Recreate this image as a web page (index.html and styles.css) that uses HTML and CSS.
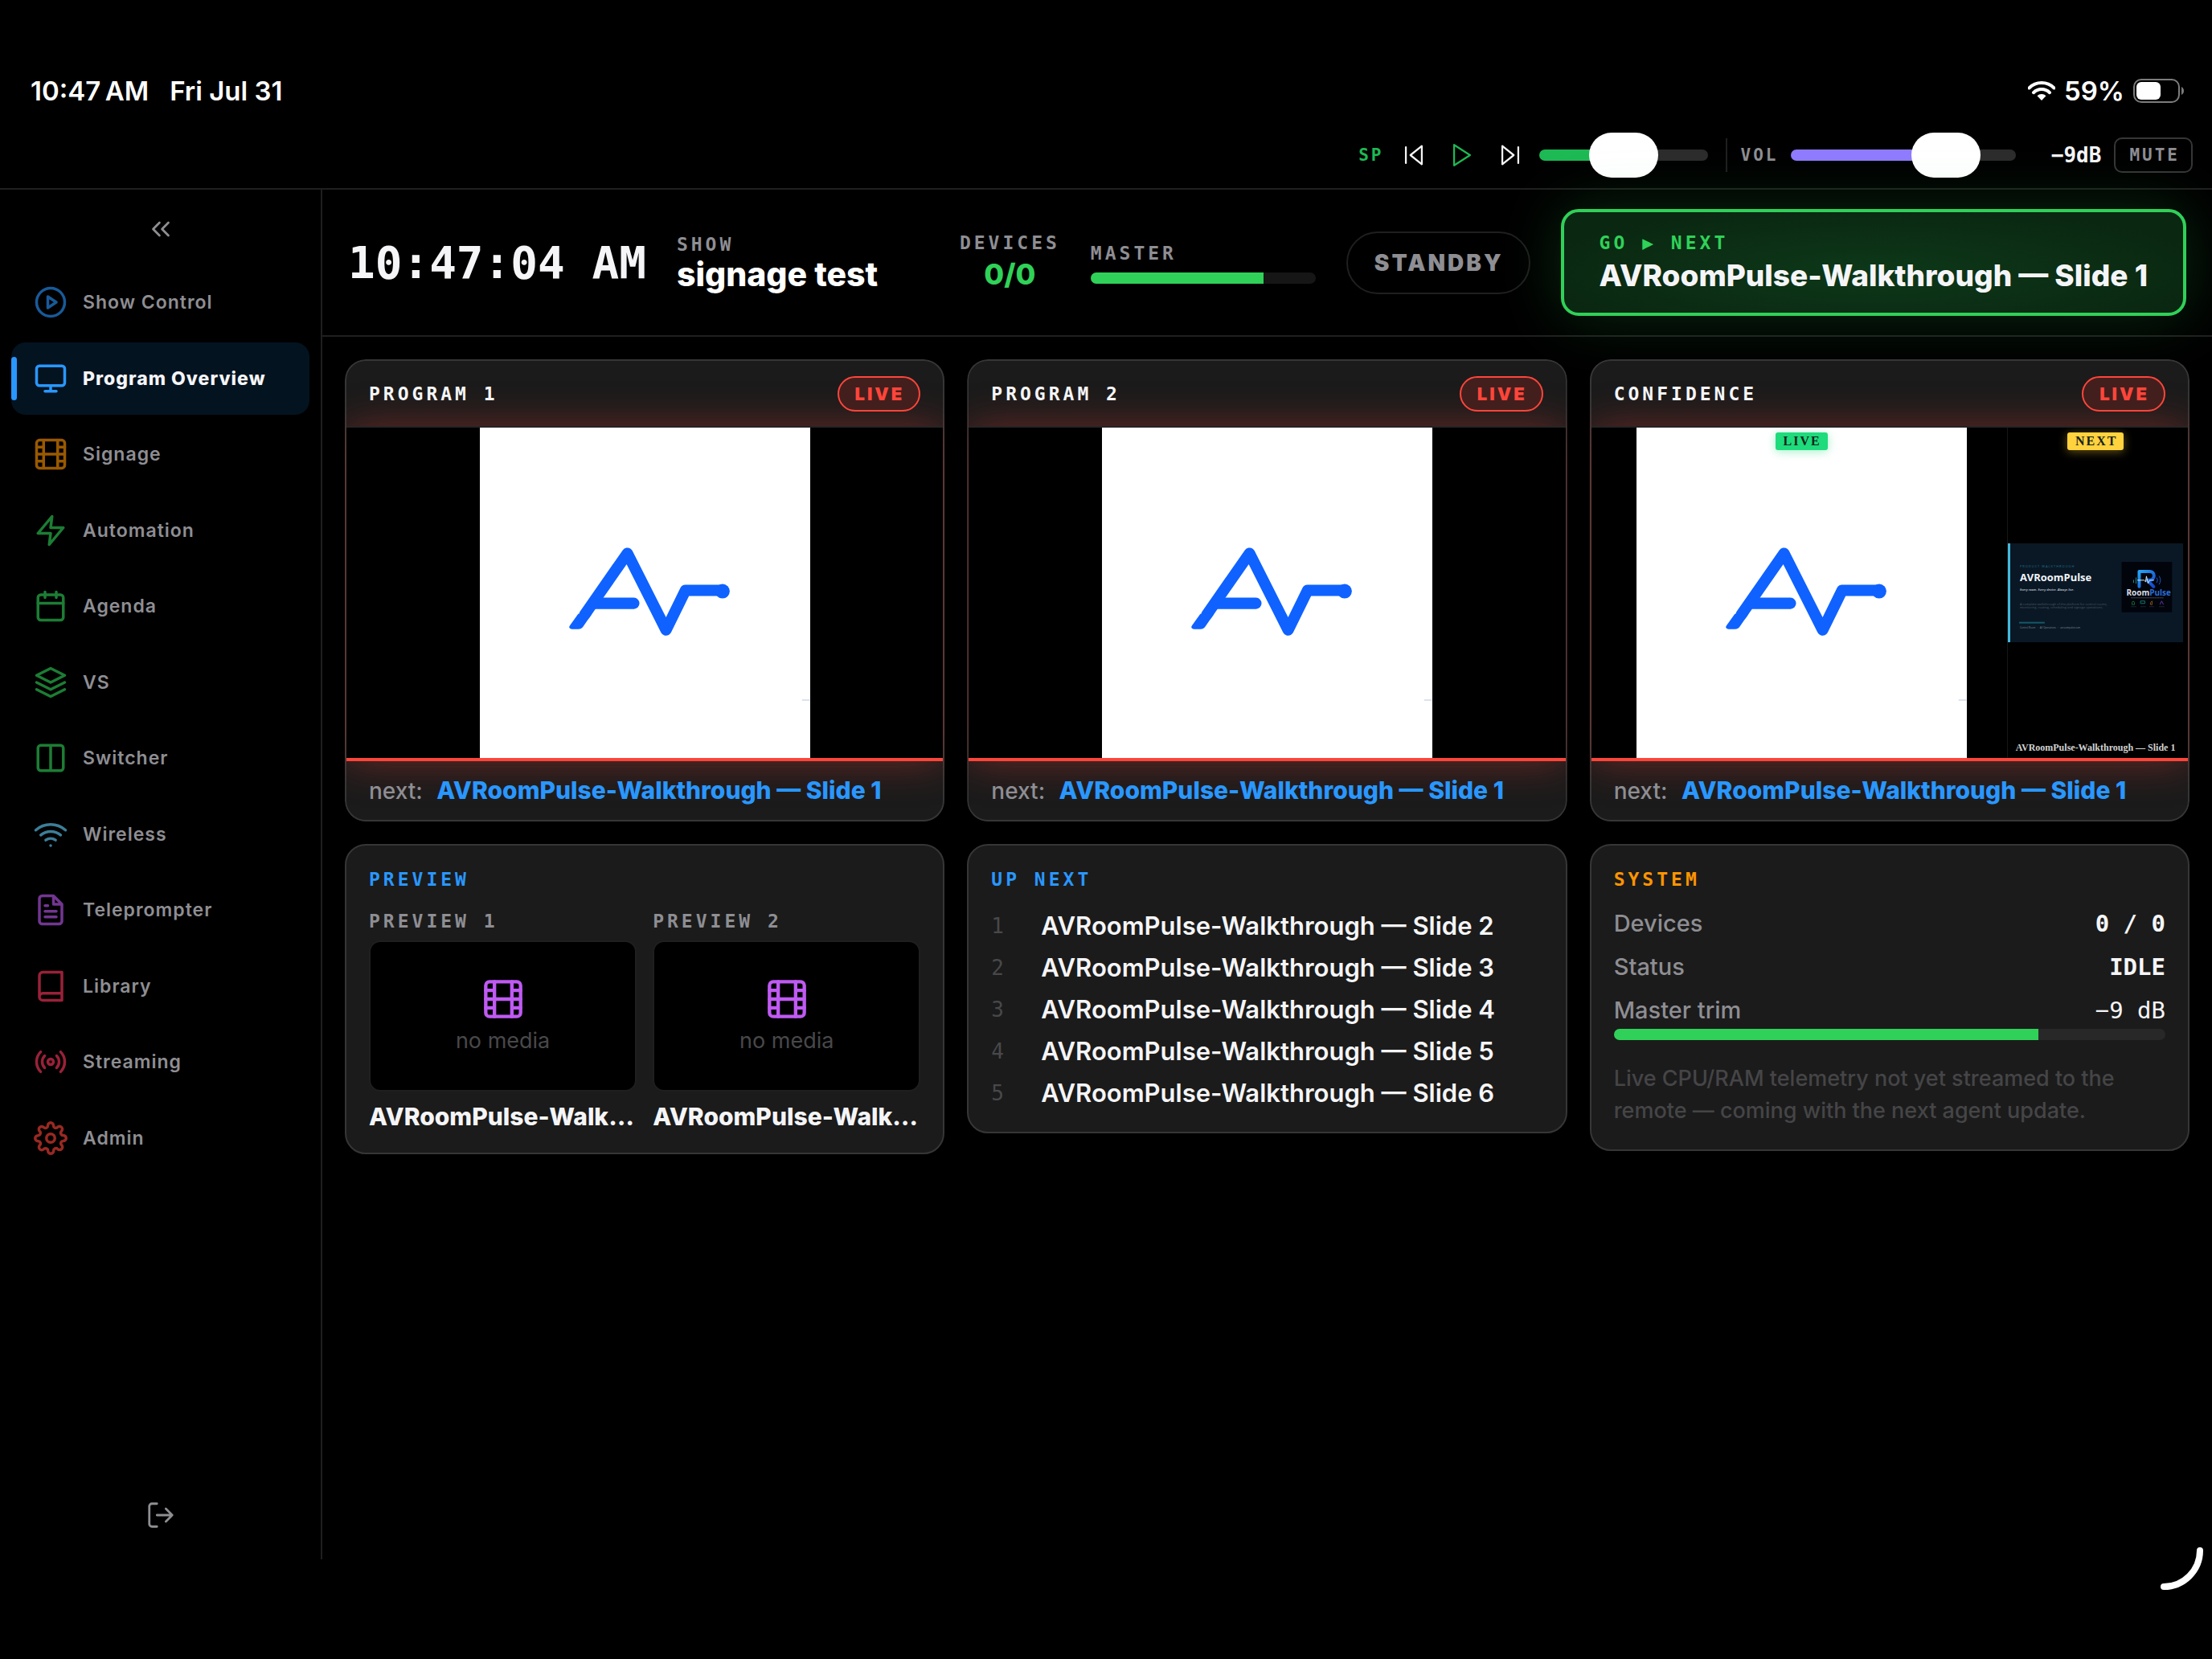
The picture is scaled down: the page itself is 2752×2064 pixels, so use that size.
FILE: index.html
```html
<!DOCTYPE html>
<html lang="en">
<head>
<meta charset="utf-8">
<meta name="viewport" content="width=device-width, initial-scale=1">
<title>Program Overview</title>
<link rel="stylesheet" href="styles.css">
</head>
<body>
<svg class="defs" aria-hidden="true">
  <symbol id="film" viewBox="0 0 24 24"><rect x="2" y="2" width="20" height="20" rx="2.18"/><path d="M7 2v20M17 2v20M2 12h20M2 7h5M2 17h5M17 17h5M17 7h5"/></symbol>
  <symbol id="av-logo" viewBox="0 0 410 410">
    <rect width="410" height="410" fill="#fff"/>
    <g fill="none" stroke="#0f62ff" stroke-width="14" stroke-linecap="round" stroke-linejoin="round">
      <path d="M130 232 183 156 231 251 255 202H300"/>
      <path d="M143 218H191"/>
    </g>
    <path d="M114 250Q109 249 112 245L122 231H139L128 247Q126 250 122 250Z" fill="#0f62ff"/>
    <circle cx="301" cy="203" r="9" fill="#0f62ff"/>
    <path d="M400 338h9" stroke="#b8c8dc" stroke-width="1"/>
  </symbol>
</svg>

<div class="status-bar">
  <div class="status-left"><span>10:47&#8201;AM</span><span>Fri Jul 31</span></div>
  <div class="status-right">
    <svg class="status-wifi" viewBox="0 0 34 24" aria-hidden="true"><g fill="none" stroke="#fff" stroke-width="4"><path d="M1.500 8.500A22 22 0 0 1 32.500 8.500"/><path d="M7 14.200A14.300 14.300 0 0 1 27 14.200"/></g><path d="M17 24 11.500 18.300A7.600 7.600 0 0 1 22.500 18.300Z" fill="#fff"/></svg>
    <span>59%</span>
    <svg class="status-battery" viewBox="0 0 64 30" aria-hidden="true"><rect x="1" y="1" width="56" height="28" rx="9" fill="none" stroke="#7c7c7c" stroke-width="2"/><rect x="4" y="4" width="30" height="22" rx="6" fill="#fff"/><path d="M60 10c4 2 4 8 0 10z" fill="#7c7c7c"/></svg>
  </div>
</div>

<div class="transport">
  <span class="tag tag-sp">SP</span>
  <div class="transport-buttons">
    <button type="button" aria-label="Previous track"><svg viewBox="0 0 24 24"><path d="M19 20 9 12 19 4zM5 19V5"/></svg></button>
    <button type="button" class="is-green" aria-label="Play"><svg viewBox="0 0 24 24"><path d="M5 3 19 12 5 21z"/></svg></button>
    <button type="button" aria-label="Next track"><svg viewBox="0 0 24 24"><path d="M5 4 15 12 5 20zM19 5v14"/></svg></button>
  </div>
  <input class="slider slider-sp" type="range" min="0" max="100" value="50" aria-label="Music volume">
  <span class="divider"></span>
  <label class="tag" for="vol">VOL</label>
  <input class="slider slider-vol" id="vol" type="range" min="0" max="100" value="77">
  <output class="vol-value" for="vol">−9dB</output>
  <button type="button" class="mute">MUTE</button>
</div>

<div class="shell">
  <aside class="sidebar">
    <button type="button" class="collapse" aria-label="Collapse sidebar"><svg viewBox="0 0 24 24"><path d="M11 17 6 12 11 7M18 17 13 12 18 7"/></svg></button>
    <nav class="nav">
      <a href="#show" class="c-blue"><svg viewBox="0 0 24 24"><circle cx="12" cy="12" r="10"/><path d="M10 8 16 12 10 16z"/></svg>Show Control</a>
      <a href="#program" class="c-blue active" aria-current="page"><svg viewBox="0 0 24 24"><rect x="2" y="3" width="20" height="14" rx="2"/><path d="M8 21h8M12 17v4"/></svg>Program Overview</a>
      <a href="#signage" class="c-orange"><svg><use href="#film"/></svg>Signage</a>
      <a href="#automation" class="c-green"><svg viewBox="0 0 24 24"><path d="M13 2 3 14h9l-1 8 10-12h-9z"/></svg>Automation</a>
      <a href="#agenda" class="c-green"><svg viewBox="0 0 24 24"><rect x="3" y="4" width="18" height="18" rx="2"/><path d="M16 2v4M8 2v4M3 10h18"/></svg>Agenda</a>
      <a href="#vs" class="c-green"><svg viewBox="0 0 24 24"><path d="M12 2 2 7l10 5 10-5zM2 17l10 5 10-5M2 12l10 5 10-5"/></svg>VS</a>
      <a href="#switcher" class="c-green"><svg viewBox="0 0 24 24"><path d="M12 3h7a2 2 0 0 1 2 2v14a2 2 0 0 1-2 2h-7m0-18H5a2 2 0 0 0-2 2v14a2 2 0 0 0 2 2h7m0-18v18"/></svg>Switcher</a>
      <a href="#wireless" class="c-cyan"><svg viewBox="0 0 24 24"><path d="M5 12.550a11 11 0 0 1 14.080 0M1.420 9a16 16 0 0 1 21.160 0M8.530 16.110a6 6 0 0 1 6.950 0M12 20h.01"/></svg>Wireless</a>
      <a href="#teleprompter" class="c-purple"><svg viewBox="0 0 24 24"><path d="M14 2H6a2 2 0 0 0-2 2v16a2 2 0 0 0 2 2h12a2 2 0 0 0 2-2V8zM14 2v6h6M16 13H8M16 17H8M10 9H8"/></svg>Teleprompter</a>
      <a href="#library" class="c-pink"><svg viewBox="0 0 24 24"><path d="M4 19.500A2.500 2.500 0 0 1 6.500 17H20M6.500 2H20v20H6.500A2.500 2.500 0 0 1 4 19.500v-15A2.500 2.500 0 0 1 6.500 2z"/></svg>Library</a>
      <a href="#streaming" class="c-pink"><svg viewBox="0 0 24 24"><circle cx="12" cy="12" r="2"/><path d="M16.240 7.760a6 6 0 0 1 0 8.490m-8.480-.01a6 6 0 0 1 0-8.490m11.310-2.820a10 10 0 0 1 0 14.140m-14.140 0a10 10 0 0 1 0-14.140"/></svg>Streaming</a>
      <a href="#admin" class="c-red"><svg viewBox="0 0 24 24"><circle cx="12" cy="12" r="3"/><path d="M19.400 15a1.650 1.650 0 0 0 .33 1.820l.06.06a2 2 0 0 1-2.830 2.830l-.06-.06a1.650 1.650 0 0 0-1.820-.33 1.650 1.650 0 0 0-1 1.510V21a2 2 0 0 1-4 0v-.09A1.650 1.650 0 0 0 9 19.400a1.650 1.650 0 0 0-1.820.33l-.06.06a2 2 0 0 1-2.830-2.830l.06-.06a1.650 1.650 0 0 0 .33-1.820 1.650 1.650 0 0 0-1.510-1H3a2 2 0 0 1 0-4h.09A1.650 1.650 0 0 0 4.600 9a1.650 1.650 0 0 0-.33-1.820l-.06-.06a2 2 0 0 1 2.830-2.830l.06.06a1.650 1.650 0 0 0 1.820.33H9a1.650 1.650 0 0 0 1-1.510V3a2 2 0 0 1 4 0v.09a1.650 1.650 0 0 0 1 1.510 1.650 1.650 0 0 0 1.820-.33l.06-.06a2 2 0 0 1 2.830 2.830l-.06.06a1.650 1.650 0 0 0-.33 1.820V9a1.650 1.650 0 0 0 1.510 1H21a2 2 0 0 1 0 4h-.09a1.650 1.650 0 0 0-1.510 1z"/></svg>Admin</a>
    </nav>
    <button type="button" class="logout" aria-label="Log out"><svg viewBox="0 0 24 24"><path d="M9 21H5a2 2 0 0 1-2-2V5a2 2 0 0 1 2-2h4M16 17l5-5-5-5M21 12H9"/></svg></button>
  </aside>

  <div class="main">
    <header class="show-bar">
      <time class="clock">10:47:04 AM</time>
      <div class="show"><span class="label">SHOW</span><strong>signage test</strong></div>
      <div class="devices"><span class="label">DEVICES</span><strong>0/0</strong></div>
      <div class="master"><span class="label">MASTER</span><div class="meter"><div class="meter-fill" style="width:77%"></div></div></div>
      <button type="button" class="standby">STANDBY</button>
      <button type="button" class="go"><span class="label">GO ▶ NEXT</span><strong>AVRoomPulse-Walkthrough — Slide 1</strong></button>
    </header>

    <main class="board">
      <section class="card output">
        <div class="output-head"><h2 class="label">PROGRAM 1</h2><span class="live">LIVE</span></div>
        <div class="screen"><svg class="frame" role="img" aria-label="AV logo"><use href="#av-logo"/></svg></div>
        <p class="output-next">next: <strong>AVRoomPulse-Walkthrough — Slide 1</strong></p>
      </section>
      <section class="card output">
        <div class="output-head"><h2 class="label">PROGRAM 2</h2><span class="live">LIVE</span></div>
        <div class="screen"><svg class="frame" role="img" aria-label="AV logo"><use href="#av-logo"/></svg></div>
        <p class="output-next">next: <strong>AVRoomPulse-Walkthrough — Slide 1</strong></p>
      </section>
      <section class="card output">
        <div class="output-head"><h2 class="label">CONFIDENCE</h2><span class="live">LIVE</span></div>
        <div class="screen">
          <div class="confidence">
            <div class="pane pane-live"><svg class="frame" role="img" aria-label="AV logo"><use href="#av-logo"/></svg><span class="pill pill-live">LIVE</span></div>
            <div class="pane pane-next">
              <span class="pill pill-next">NEXT</span>
              <svg class="slide" viewBox="0 0 219 124" role="img" aria-label="AVRoomPulse slide">
                <defs>
                  <linearGradient id="r-blue" x1="0" y1="0" x2="1" y2="1"><stop offset="0" stop-color="#25a3f5"/><stop offset="1" stop-color="#1546c8"/></linearGradient>
                </defs>
                <rect width="219" height="124" fill="#0a1826"/>
                <rect width="3" height="124" fill="#45b8dc"/>
                <text x="15" y="30" class="s-kicker">PRODUCT WALKTHROUGH</text>
                <text x="15" y="47" class="s-title">AVRoomPulse</text>
                <text x="15" y="59" class="s-sub">Every room. Every device. Always live.</text>
                <text x="15" y="77" class="s-body">A complete walkthrough of the platform for control rooms,</text>
                <text x="15" y="81" class="s-body">monitoring, routing, scheduling and signage operations.</text>
                <rect x="14" y="98" width="32" height="2" fill="#145868"/>
                <text x="15" y="106" class="s-foot">Control Room &nbsp; · &nbsp; AV Operations &nbsp; · &nbsp; avroompulse.com</text>
                <rect x="142" y="23" width="63" height="63" rx="1" fill="#02040c"/>
                <g fill="none" stroke-width="1">
                  <path d="M164 54V35H177a5 5 0 0 1 0 11H174L182 54" stroke="url(#r-blue)" stroke-width="4"/>
                  <path d="M162 46h8l2 2 1-7 2 9 2-4h5" stroke="#dfe6ee"/>
                  <path d="M157 49v-3M160 50v-7" stroke="#168f86"/>
                  <path d="M186 43q2 3 0 6M189 41q3 5 0 10" stroke="#1757c8"/>
                  <path d="M154 68h40" stroke="#3b444e" stroke-dasharray="2 1"/>
                  <path d="M155 76v-2a1.500 1.500 0 0 1 3 0v2z" stroke="#146b33"/><path d="M166 72h5v3h-5z" stroke="#137464"/><path d="M178 76v-2l2-2v4z" stroke="#84501a"/><path d="M190 76l2-4 2 4" stroke="#5a35aa"/>
                  <path d="M154 79h6M166 79h6M177 79h5M189 79h6" stroke="#1c242c"/>
                </g>
                <text x="148" y="65" class="s-brand">Room<tspan fill="#2a6fd8">Pulse</tspan></text>
              </svg>
              <span class="pane-caption">AVRoomPulse-Walkthrough — Slide 1</span>
            </div>
          </div>
        </div>
        <p class="output-next">next: <strong>AVRoomPulse-Walkthrough — Slide 1</strong></p>
      </section>

      <section class="card panel">
        <h2 class="label c-blue">PREVIEW</h2>
        <div class="previews">
          <div class="preview"><span class="label">PREVIEW 1</span><div class="preview-box"><svg><use href="#film"/></svg><span>no media</span></div><strong>AVRoomPulse-Walk…</strong></div>
          <div class="preview"><span class="label">PREVIEW 2</span><div class="preview-box"><svg><use href="#film"/></svg><span>no media</span></div><strong>AVRoomPulse-Walk…</strong></div>
        </div>
      </section>

      <section class="card panel">
        <h2 class="label c-blue">UP NEXT</h2>
        <ol class="queue">
          <li><span class="num">1</span>AVRoomPulse-Walkthrough — Slide 2</li>
          <li><span class="num">2</span>AVRoomPulse-Walkthrough — Slide 3</li>
          <li><span class="num">3</span>AVRoomPulse-Walkthrough — Slide 4</li>
          <li><span class="num">4</span>AVRoomPulse-Walkthrough — Slide 5</li>
          <li><span class="num">5</span>AVRoomPulse-Walkthrough — Slide 6</li>
        </ol>
      </section>

      <section class="card panel">
        <h2 class="label c-orange">SYSTEM</h2>
        <dl class="stats">
          <div><dt>Devices</dt><dd>0 / 0</dd></div>
          <div><dt>Status</dt><dd>IDLE</dd></div>
          <div><dt>Master trim</dt><dd class="plain">−9 dB</dd></div>
        </dl>
        <div class="meter"><div class="meter-fill" style="width:77%"></div></div>
        <p class="note">Live CPU/RAM telemetry not yet streamed to the remote — coming with the next agent update.</p>
      </section>
    </main>
  </div>
</div>

<svg class="corner" viewBox="0 0 56 56" aria-hidden="true"><path d="M5 51A45 45 0 0 0 50 6" fill="none" stroke="#fff" stroke-width="8" stroke-linecap="round"/></svg>
</body>
</html>
```
FILE: styles.css
```css
:root {
  --blue: #2997ff;
  --green: #30d158;
  --orange: #ff9500;
  --red: #ff453a;
  --line: #1f1f1f;
  --card: #1b1b1b;
  --card-line: #363636;
  --text: #f5f5f7;
  --muted: #8e8e93;
  --faint: #48484a;
  --sans: Inter, "Liberation Sans", sans-serif;
  --mono: "DejaVu Sans Mono", "Liberation Mono", monospace;
}

* {
  box-sizing: border-box;
}

body {
  margin: 0;
  min-height: 100vh;
  display: flex;
  flex-direction: column;
  background: #000;
  color: var(--text);
  font-family: var(--sans);
  font-size: 28px;
}

h2, p, ol, dl, dd {
  margin: 0;
  padding: 0;
}

button {
  margin: 0;
  padding: 0;
  border: 0;
  background: none;
  color: inherit;
  font: inherit;
}

svg {
  display: block;
  fill: none;
  stroke: currentColor;
  stroke-width: 2;
  stroke-linecap: round;
  stroke-linejoin: round;
}

strong {
  font-size: 30px;
  font-weight: 800;
}

.defs {
  position: absolute;
  width: 0;
  height: 0;
}

.label {
  font: 700 23px/28px var(--mono);
  letter-spacing: 4px;
  color: var(--muted);
}

.c-blue { --tint: var(--blue); }
.c-orange { --tint: var(--orange); }
.c-green { --tint: var(--green); }
.c-cyan { --tint: #64d2ff; }
.c-purple { --tint: #bf5af2; }
.c-pink { --tint: #ff375f; }
.c-red { --tint: var(--red); }

/* Device status bar */
.status-bar {
  display: flex;
  justify-content: space-between;
  align-items: center;
  height: 150px;
  padding: 76px 34px 0 38px;
  font-size: 33px;
  font-weight: 600;
  color: #fff;
}

.status-left {
  display: flex;
  gap: 26px;
}

.status-right {
  display: flex;
  align-items: center;
  gap: 11px;
}

.status-wifi {
  width: 34px;
  height: 24px;
  stroke: none;
}

.status-battery {
  width: 64px;
  height: 30px;
  stroke: none;
}

/* Playback and volume strip */
.transport {
  display: flex;
  justify-content: flex-end;
  align-items: center;
  gap: 16px;
  height: 86px;
  padding: 1px 24px 0;
  border-bottom: 2px solid var(--line);
}

.tag {
  font: 700 21px/28px var(--mono);
  letter-spacing: 3px;
  color: var(--muted);
}

.tag-sp {
  color: #1db954;
}

.transport-buttons {
  display: flex;
  gap: 26px;
  padding: 0 3px 0 5px;
}

.transport-buttons svg {
  width: 34px;
  height: 34px;
  stroke-width: 1.6;
}

.is-green {
  color: #1db954;
}

.slider {
  -webkit-appearance: none;
  appearance: none;
  height: 14px;
  margin: 0;
  border-radius: 7px;
}

.slider::-webkit-slider-thumb {
  -webkit-appearance: none;
  appearance: none;
  width: 86px;
  height: 56px;
  border-radius: 28px;
  background: #fff;
}

.slider-sp {
  width: 210px;
  background: linear-gradient(to right, #1db954 50%, #2c2c2c 50%);
}

.slider-vol {
  width: 280px;
  background: linear-gradient(to right, #8f7bff 69%, #2c2c2c 69%);
}

.divider {
  width: 2px;
  height: 42px;
  margin-left: 6px;
  background: var(--line);
}

.vol-value {
  width: 90px;
  text-align: right;
  font: 700 26px/32px var(--mono);
}

.mute {
  padding: 0 14px 0 17px;
  border: 2px solid var(--card-line);
  border-radius: 10px;
  font: 700 21px/40px var(--mono);
  letter-spacing: 3px;
  color: var(--muted);
}

/* Page frame */
.shell {
  flex: 1;
  display: grid;
  grid-template-columns: 401px 1fr;
  margin-bottom: 124px;
}

.sidebar {
  display: flex;
  flex-direction: column;
  padding: 30px 14px 36px;
  border-right: 2px solid var(--line);
}

.collapse,
.logout {
  align-self: center;
  color: var(--muted);
}

.collapse svg,
.logout svg {
  width: 38px;
  height: 38px;
  stroke-width: 1.75;
}

.logout {
  margin-top: auto;
}

.nav {
  display: flex;
  flex-direction: column;
  justify-content: space-between;
  min-height: 1130px;
  margin-top: 27px;
}

.nav a {
  position: relative;
  display: flex;
  align-items: center;
  gap: 19px;
  height: 90px;
  padding: 0 28px;
  border-radius: 18px;
  font-size: 23px;
  font-weight: 600;
  letter-spacing: 1px;
  color: var(--muted);
  text-decoration: none;
}

.nav svg {
  width: 42px;
  height: 42px;
  color: var(--tint);
  opacity: 0.6;
}

.nav .active {
  background: #041320;
  color: var(--text);
  font-weight: 800;
}

.nav .active svg {
  opacity: 1;
}

.nav .active::before {
  content: "";
  position: absolute;
  left: 0;
  top: 18px;
  bottom: 18px;
  width: 7px;
  border-radius: 4px;
  background: var(--blue);
}

/* Show header */
.show-bar {
  display: flex;
  align-items: center;
  gap: 38px;
  padding: 24px 32px;
  border-bottom: 2px solid var(--line);
}

.clock {
  font: 700 56px/64px var(--mono);
}

.show {
  flex: 1;
  display: flex;
  flex-direction: column;
}

.show strong {
  font-size: 41px;
  line-height: 46px;
  color: #fff;
  white-space: nowrap;
}

.devices {
  display: flex;
  flex-direction: column;
  align-items: center;
}

.devices strong {
  font-size: 36px;
  line-height: 50px;
  color: var(--green);
}

.master {
  display: flex;
  flex-direction: column;
  gap: 10px;
  width: 280px;
}

.meter {
  height: 14px;
  border-radius: 7px;
  overflow: hidden;
  background: #161616;
}

.meter-fill {
  height: 100%;
  background: var(--green);
}

.standby {
  padding: 0 31px 0 33px;
  border: 2px solid var(--line);
  border-radius: 39px;
  font-size: 28px;
  line-height: 74px;
  font-weight: 900;
  letter-spacing: 3px;
  color: var(--muted);
}

.go {
  display: flex;
  flex-direction: column;
  gap: 4px;
  padding: 24px 44px;
  border: 4px solid var(--green);
  border-radius: 22px;
  background: radial-gradient(ellipse at 50% 60%, #0d3819, #0a2711 80%);
  box-shadow: 0 0 76px rgba(48, 209, 88, 0.2);
  text-align: left;
}

.go .label {
  color: var(--green);
}

.go strong {
  font-size: 37px;
  line-height: 45px;
  white-space: nowrap;
}

/* Board */
.board {
  display: grid;
  grid-template-columns: repeat(3, minmax(0, 1fr));
  align-items: start;
  gap: 28px;
  padding: 28px;
}

.card {
  border: 2px solid var(--card-line);
  border-radius: 26px;
  background: var(--card);
}

.output {
  clip-path: inset(0 round 26px);
}

.output-head {
  position: relative;
  z-index: 1;
  display: flex;
  justify-content: space-between;
  align-items: center;
  height: 83px;
  padding: 0 28px;
  border-bottom: 2px solid #262424;
}

.output-head .label {
  color: var(--text);
}

.live {
  padding: 0 18px 0 20px;
  border: 2px solid var(--red);
  border-radius: 22px;
  background: #421f1d;
  font-size: 22px;
  line-height: 40px;
  font-weight: 900;
  letter-spacing: 3px;
  color: var(--red);
}

.screen {
  position: relative;
  display: flex;
  justify-content: center;
  aspect-ratio: 742 / 415;
  border-bottom: 4px solid var(--red);
  background: #000;
  box-shadow: 0 0 48px rgba(255, 69, 58, 0.36);
}

.frame {
  height: 100%;
  aspect-ratio: 1;
  stroke: none;
}

.output-next {
  position: relative;
  z-index: 1;
  padding: 16px 28px;
  line-height: 40px;
  font-weight: 500;
  color: var(--muted);
  white-space: nowrap;
}

.output-next strong {
  margin-left: 10px;
  color: var(--blue);
}

.confidence {
  display: grid;
  grid-template-columns: 7fr 3fr;
  aspect-ratio: 16 / 9;
  height: 100%;
}

.pane {
  position: relative;
  display: flex;
  min-width: 0;
  min-height: 0;
  justify-content: center;
  align-items: center;
}

.pane-next {
  border-left: 1px solid #161616;
}

.pill {
  position: absolute;
  top: 6px;
  padding: 0 8px 0 10px;
  border-radius: 3px;
  font: 700 16px/22px "Liberation Serif", serif;
  letter-spacing: 2px;
  color: #14231a;
}

.pill-live {
  background: #1edb7c;
  box-shadow: 0 2px 12px rgba(30, 219, 124, 0.4);
}

.pill-next {
  background: #ffd23e;
  box-shadow: 0 2px 12px rgba(255, 210, 62, 0.4);
}

.slide {
  width: 100%;
  stroke: none;
}

.slide text {
  font-family: "Open Sans", sans-serif;
}

.slide .s-kicker { font-size: 4px; letter-spacing: 1px; fill: #1f7488; }
.slide .s-title { font-size: 13px; font-weight: 700; fill: #f2f5f8; }
.slide .s-sub { font-size: 4px; font-style: italic; font-weight: 600; fill: #c4ccd4; }
.slide .s-body { font-size: 4px; fill: #4c5762; }
.slide .s-foot { font-size: 3px; fill: #7f8a94; }
.slide .s-brand { font-size: 10px; font-weight: 700; fill: #d9dee5; }

.pane-caption {
  position: absolute;
  bottom: 6px;
  font: 700 12px/14px "Liberation Serif", serif;
  color: #d2d2d2;
  white-space: nowrap;
}

/* Lower panels */
.panel {
  padding: 28px;
}

.panel h2 {
  margin-bottom: 24px;
  color: var(--tint);
}

.previews {
  display: grid;
  grid-template-columns: repeat(2, minmax(0, 1fr));
  gap: 20px;
}

.preview {
  display: flex;
  flex-direction: column;
}

.preview-box {
  display: flex;
  flex-direction: column;
  justify-content: center;
  align-items: center;
  gap: 10px;
  aspect-ratio: 16 / 9;
  margin: 10px 0 14px;
  border: 2px solid #1f1f1f;
  border-radius: 14px;
  background: #000;
  font-size: 27px;
  line-height: 32px;
  color: var(--faint);
}

.preview-box svg {
  width: 52px;
  height: 52px;
  color: #bf5af2;
}

.preview strong {
  line-height: 34px;
  white-space: nowrap;
}

.queue {
  display: grid;
  gap: 12px;
  list-style: none;
  font-size: 31px;
  line-height: 40px;
  font-weight: 600;
}

.queue li {
  display: flex;
  align-items: center;
}

.num {
  width: 62px;
  font-family: var(--mono);
  font-size: 26px;
  font-weight: 400;
  color: var(--faint);
}

.stats {
  display: grid;
  gap: 20px;
  margin-bottom: 6px;
}

.stats div {
  display: flex;
  justify-content: space-between;
  line-height: 34px;
}

.stats dt {
  font-size: 29px;
  font-weight: 500;
  color: var(--muted);
}

.stats dd {
  font: 700 29px/34px var(--mono);
}

.stats .plain {
  font-weight: 400;
}

.panel .meter {
  background: #282828;
}

.note {
  margin-top: 28px;
  font-size: 27px;
  line-height: 40px;
  font-weight: 500;
  color: #454547;
}

.corner {
  position: fixed;
  right: 9px;
  bottom: 85px;
  width: 56px;
  height: 56px;
}
```
